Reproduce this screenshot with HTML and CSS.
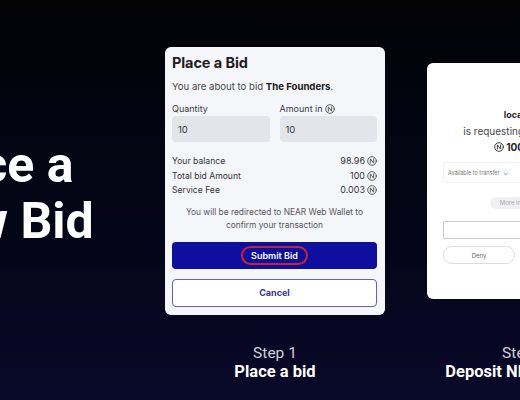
FILE: index.html
```html
<!DOCTYPE html>
<html lang="en">
<head>
<meta charset="utf-8">
<title>Place a New Bid</title>
<link rel="stylesheet" href="styles.css">
</head>
<body>
<main class="stage">
  <h1 class="headline">Place a<br>New Bid</h1>

  <section class="step step-one">
    <div class="card-slot">
      <div class="bid-card">
        <h2 class="bid-title">Place a Bid</h2>
        <p class="bid-intro">You are about to bid <b>The Founders</b>.</p>
        <div class="fields">
          <label class="field">
            <span class="field-label">Quantity</span>
            <span class="field-input">10</span>
          </label>
          <label class="field">
            <span class="field-label">Amount in <svg class="near" viewBox="0 0 12 12"><circle cx="6" cy="6" r="5.2"/><path d="M4 8.6V3.4L8 8.6V3.4"/></svg></span>
            <span class="field-input">10</span>
          </label>
        </div>
        <dl class="summary">
          <div class="summary-row"><dt>Your balance</dt><dd>98.96 <svg class="near" viewBox="0 0 12 12"><circle cx="6" cy="6" r="5.2"/><path d="M4 8.6V3.4L8 8.6V3.4"/></svg></dd></div>
          <div class="summary-row"><dt>Total bid Amount</dt><dd>100 <svg class="near" viewBox="0 0 12 12"><circle cx="6" cy="6" r="5.2"/><path d="M4 8.6V3.4L8 8.6V3.4"/></svg></dd></div>
          <div class="summary-row"><dt>Service Fee</dt><dd>0.003 <svg class="near" viewBox="0 0 12 12"><circle cx="6" cy="6" r="5.2"/><path d="M4 8.6V3.4L8 8.6V3.4"/></svg></dd></div>
        </dl>
        <p class="redirect">You will be redirected to NEAR Web Wallet to<br>confirm your transaction</p>
        <button class="btn btn-submit" type="button"><span class="annot">Submit Bid</span></button>
        <button class="btn btn-cancel" type="button">Cancel</button>
      </div>
    </div>
    <p class="caption"><span class="caption-step">Step 1</span><strong class="caption-title">Place a bid</strong></p>
  </section>

  <section class="step step-two">
    <div class="card-slot">
      <div class="wallet-card">
        <svg class="wallet-icon" viewBox="0 0 14 10"><path d="M3 1.5h8M5 5h4M3 8.5h8"/></svg>
        <p class="wallet-host">localhost</p>
        <p class="wallet-req">is requesting a transfer of</p>
        <p class="wallet-amount"><svg class="near near-dark" viewBox="0 0 12 12"><circle cx="6" cy="6" r="5.2"/><path d="M4 8.6V3.4L8 8.6V3.4"/></svg> 100 NEAR</p>
        <div class="wallet-avail">Available to transfer <span class="chev">⌄</span></div>
        <div class="wallet-more">More information</div>
        <div class="wallet-input"></div>
        <div class="wallet-actions">
          <span class="pill pill-deny">Deny</span>
          <span class="pill pill-approve">Approve</span>
        </div>
      </div>
    </div>
    <p class="caption"><span class="caption-step">Step 2</span><strong class="caption-title">Deposit NEAR tokens</strong></p>
  </section>
</main>
</body>
</html>
```

FILE: styles.css
```css
* { box-sizing: border-box; }

html, body {
  margin: 0;
  padding: 0;
}

body {
  width: 520px;
  height: 400px;
  overflow: hidden;
  background: linear-gradient(180deg, #030308 0%, #05051a 65%, #09092a 100%);
  font-family: Roboto, "Liberation Sans", sans-serif;
}

.stage {
  display: flex;
  align-items: flex-start;
  height: 400px;
}

.headline {
  flex: 0 0 256px;
  margin: 137px 0 0 -91px;
  color: #fff;
  font-family: Roboto, "Liberation Sans", sans-serif;
  font-weight: 700;
  font-size: 50px;
  line-height: 56px;
  white-space: nowrap;
}

.step {
  flex: 0 0 auto;
  display: flex;
  flex-direction: column;
  align-items: center;
}

.step-one { width: 220px; }
.step-two { width: 194px; margin-left: 42px; }

.card-slot {
  height: 298px;
  margin-top: 32px;
  width: 100%;
  display: flex;
  align-items: center;
}

/* ---------- bid card ---------- */
.bid-card {
  width: 220px;
  height: 268px;
  background: #f5f6f9;
  border-radius: 6px;
  padding: 7px 8px 8px 7px;
  display: flex;
  flex-direction: column;
  font-family: Inter, "Noto Sans", sans-serif;
  color: #333;
}

.bid-title {
  margin: 0;
  font-size: 14.5px;
  line-height: 18px;
  font-weight: 700;
  color: #1c1c22;
  letter-spacing: -0.1px;
}

.bid-intro {
  margin: 8px 0 0;
  font-size: 9.6px;
  line-height: 13px;
  color: #47474f;
}
.bid-intro b { color: #17171c; font-weight: 700; }

.fields {
  margin-top: 10px;
  display: grid;
  grid-template-columns: 1fr 1fr;
  column-gap: 10px;
}

.field { display: flex; flex-direction: column; }

.field-label {
  font-size: 9px;
  line-height: 12px;
  color: #3a3a42;
  margin-bottom: 1px;
  display: flex;
  align-items: center;
  gap: 2px;
}

.field-input {
  height: 26px;
  background: #e3e5ea;
  border-radius: 4px;
  padding-left: 6px;
  display: flex;
  align-items: center;
  font-size: 9.5px;
  color: #333;
}

.near {
  width: 10px;
  height: 10px;
  fill: #f0f0f3;
  stroke: #555;
  stroke-width: 1.1;
  stroke-linejoin: round;
  stroke-linecap: round;
  vertical-align: -1px;
}

.summary {
  margin: 12px 0 0;
}

.summary-row {
  display: flex;
  justify-content: space-between;
  font-size: 8.6px;
  line-height: 14.5px;
  color: #35353c;
}
.summary-row dt, .summary-row dd { margin: 0; }
.summary-row dd { display: flex; align-items: center; gap: 2px; font-size: 9px; }

.redirect {
  margin: 8px 0 0;
  text-align: center;
  font-size: 8.4px;
  line-height: 13px;
  color: #55555d;
}

.btn {
  display: flex;
  align-items: center;
  justify-content: center;
  width: 100%;
  font-family: Inter, "Noto Sans", sans-serif;
  font-size: 9px;
  font-weight: 700;
  border-radius: 4px;
  padding: 0;
  cursor: pointer;
}

.btn-submit {
  margin-top: 10px;
  height: 27px;
  background: #0d0f9e;
  border: 0;
  color: #fff;
  font-weight: 600;
}

.annot {
  border: 2px solid #c9222e;
  border-radius: 10px;
  padding: 2px 8px;
  line-height: 11px;
}

.btn-cancel {
  margin-top: 10px;
  height: 28px;
  background: #fff;
  border: 1.5px solid #5f5fcb;
  color: #3535a5;
}

/* ---------- wallet card ---------- */
.wallet-card {
  width: 194px;
  height: 236px;
  background: #fff;
  border-radius: 6px;
  padding: 23px 16px 0;
  display: flex;
  flex-direction: column;
  align-items: center;
  font-family: Inter, "Noto Sans", sans-serif;
  color: #333;
}

.wallet-icon {
  width: 14px;
  height: 10px;
  fill: none;
  stroke: #999;
  stroke-width: 1;
  stroke-dasharray: 1.5 1;
}

.wallet-host {
  margin: 13px 0 0;
  font-size: 9px;
  line-height: 12px;
  font-weight: 700;
  color: #25252a;
}

.wallet-req {
  margin: 4px 0 0;
  font-size: 10px;
  line-height: 13px;
  color: #44444a;
}

.wallet-amount {
  margin: 3px 0 0;
  font-size: 10px;
  line-height: 13px;
  font-weight: 700;
  color: #25252a;
}
.near-dark { stroke: #333; fill: none; }

.wallet-avail {
  align-self: stretch;
  margin-top: 8px;
  height: 21px;
  border: 1px solid #f1f1f3;
  border-radius: 3px;
  padding-left: 4px;
  display: flex;
  align-items: center;
  gap: 3px;
  font-size: 5.5px;
  color: #777;
}
.chev { color: #6a8cd0; font-size: 7px; line-height: 5px; }

.wallet-more {
  margin-top: 14px;
  height: 12px;
  padding: 0 10px;
  background: #f0f0f2;
  border-radius: 6px;
  font-size: 6px;
  line-height: 12px;
  color: #aaa;
}

.wallet-input {
  align-self: stretch;
  margin-top: 12px;
  height: 18px;
  border: 1px solid #c9c9cc;
  border-radius: 2px;
}

.wallet-actions {
  align-self: stretch;
  margin-top: 7px;
  display: grid;
  grid-template-columns: 1fr 1fr;
  column-gap: 18px;
}

.pill {
  height: 18px;
  border-radius: 9px;
  border: 1px solid #dedee2;
  display: flex;
  align-items: center;
  justify-content: center;
  font-size: 6px;
  color: #666;
}
.pill-approve { background: #0072ce; border-color: #0072ce; color: #fff; }

/* ---------- captions ---------- */
.caption {
  margin: 14px 0 0;
  display: flex;
  flex-direction: column;
  align-items: center;
  white-space: nowrap;
}

.caption-step {
  font-size: 15.5px;
  line-height: 18px;
  color: #cfd0d8;
}

.caption-title {
  font-size: 16.5px;
  line-height: 20px;
  font-weight: 700;
  color: #fff;
}
```
